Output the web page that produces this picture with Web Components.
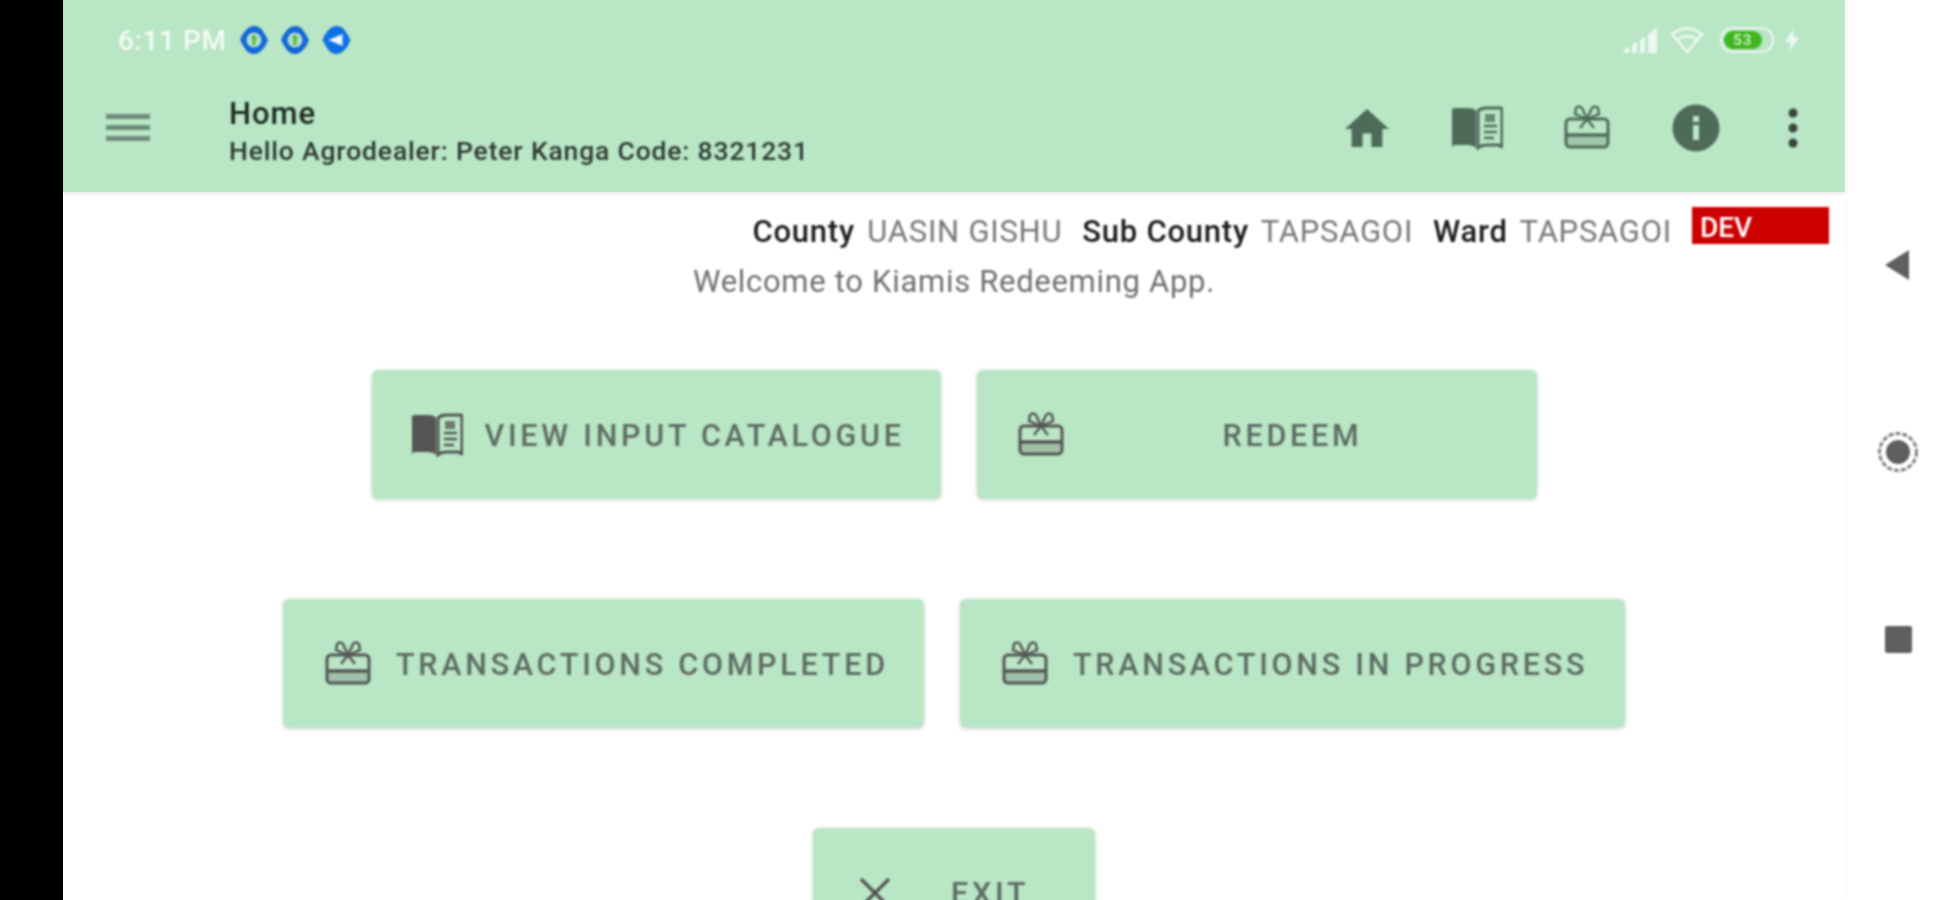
<!DOCTYPE html>
<html>
<head>
<meta charset="utf-8">
<style>
  html, body { margin: 0; height: 100%; overflow: hidden; background: #fff; font-family: Roboto, "Liberation Sans", sans-serif; }
</style>
</head>
<body>
<template id="gift">
  <svg viewBox="0 0 46 44" width="100%" height="100%" fill="none" stroke="currentColor" stroke-width="3">
    <path d="M3 31h40v7q0 3-3 3H6q-3 0-3-3z" fill="currentColor" fill-opacity=".25" stroke="none"/>
    <rect x="2" y="14" width="42" height="28" rx="4"/>
    <path d="M2 30h42" stroke-width="3.4"/>
    <path d="M23 14 18 3q-3-3-6 0l-1 6zM23 14l5-11q3-3 6 0l1 6zM23 14l-7 9M23 14l7 9" stroke-width="2.4"/>
  </svg>
</template>
<template id="book">
  <svg viewBox="0 0 52 44" width="100%" height="100%">
    <path fill="currentColor" d="M1 4q0-2 2-2h14q6 0 8 3v37q-3-3-9-3H4q-3 0-3 4z"/>
    <path fill="none" stroke="currentColor" stroke-width="3" d="M27 5q3-3 8-3h14q2 0 2 2v38q-1-3-4-3H36q-6 0-9 3z"/>
    <path fill="none" stroke="currentColor" stroke-width="2.5" d="M33 20h13M33 26h13M33 32h10"/>
    <path fill="currentColor" d="M34 8h10v8H34z" opacity=".75"/>
  </svg>
</template>

<kiamis-app>
  <status-bar slot="status" time="6:11 PM"></status-bar>
  <app-toolbar slot="toolbar" heading="Home" sub="Hello Agrodealer: Peter Kanga Code: 8321231"></app-toolbar>
  <location-line slot="content"></location-line>
  <p slot="content" class="welcome" style="margin:0;text-align:center;font:400 31px Roboto,sans-serif;color:#6e6e6e;letter-spacing:.7px;padding-top:1px">Welcome to Kiamis Redeeming App.</p>
  <menu-rows slot="content">
    <menu-button icon="book" style="--w:569px;--pl:39px;--gap:22px">VIEW INPUT CATALOGUE</menu-button>
    <menu-button icon="gift" center style="--w:560px;--pl:41px">REDEEM</menu-button>
    <menu-button icon="gift" style="--w:641px;--pl:42px;--gap:25px">TRANSACTIONS COMPLETED</menu-button>
    <menu-button icon="gift" style="--w:665px;--pl:42px;--gap:25px">TRANSACTIONS IN PROGRESS</menu-button>
    <menu-button icon="x" style="--w:282px;--pl:46px;--gap:60px">EXIT</menu-button>
  </menu-rows>
</kiamis-app>

<script>
function shadow(el, html) {
  el.attachShadow({ mode: 'open' }).innerHTML = html;
}

class KiamisApp extends HTMLElement {
  connectedCallback() {
    shadow(this, `
      <style>
        :host { display: flex; height: 900px; width: 1953px; overflow: hidden; background: #fff; }
        .bezel { width: 63px; background: #000; flex: none; }
        .screen { width: 1782px; flex: none; display: flex; flex-direction: column; }
        .head { background: #b9e6c5; height: 192px; flex: none; box-shadow: 0 1px 5px rgba(0,0,0,.12); }
        .blur { filter: blur(.9px); }
        nav-rail { flex: 1; border-left: 1px solid #f6f6f6; filter: blur(.8px); }
      </style>
      <div class="bezel"></div>
      <div class="screen">
        <div class="head"><div class="blur"><slot name="status"></slot><slot name="toolbar"></slot></div></div>
        <div class="blur"><slot name="content"></slot></div>
      </div>
      <nav-rail></nav-rail>`);
  }
}

class StatusBar extends HTMLElement {
  connectedCallback() {
    const dot = (inner) => `<svg width="28" height="30" viewBox="0 0 28 30">
        <path d="M14 1q5 0 8 4t6 10q-2 6-6 10t-8 4q-5 0-8-4t-6-10q2-6 6-10t8-4z" fill="#1367d8"/>
        <circle cx="14" cy="15" r="7.5" fill="#b4dfd0"/>${inner}</svg>`;
    const green = '<path d="M14 9l3.5 5h-2v6h-3v-6h-2z" fill="#5cb836"/>';
    shadow(this, `
      <style>
        :host { display: flex; align-items: center; height: 80px; padding: 0 45px 0 55px; box-sizing: border-box; }
        .time { font: 500 28px Roboto, sans-serif; letter-spacing: .6px; color: #f4fbf6; width: 122px; white-space: nowrap; }
        .notes { display: flex; gap: 13px; }
        .notes svg { display: block; }
        .right { margin-left: auto; display: flex; align-items: center; }
      </style>
      <span class="time">${this.getAttribute('time')}</span>
      <span class="notes">
        ${dot(green)}${dot(green)}
        <svg width="29" height="30" viewBox="0 0 28 30"><path d="M14 1q5 0 8 4t6 10q-2 6-6 10t-8 4q-5 0-8-4t-6-10q2-6 6-10t8-4z" fill="#0f70e6"/><path d="M6 15l14-6v12z" fill="#eaf6ff"/></svg>
      </span>
      <span class="right">
        <svg width="34" height="26" viewBox="0 0 34 26" fill="#eef8f1" style="margin-right:12px"><path d="M0 26v-4l5-2v6zM8 26v-8l5-3v11zM16 26V13l5-3v16zM24 26V8l9-8v26z"/></svg>
        <svg width="34" height="28" viewBox="0 0 34 28" fill="none" stroke="#eef8f1" stroke-width="2.6" style="margin-right:16px"><path d="M2 8q15-11 30 0L17 26zM8 13q9-6 18 0"/></svg>
        <battery-pill level="53"></battery-pill>
        <svg width="16" height="24" viewBox="0 0 16 24" fill="#eef8f1" style="margin-left:10px"><path d="M10 0 1 14h6l-2 10 10-15H9z"/></svg>
      </span>`);
  }
}

class BatteryPill extends HTMLElement {
  connectedCallback() {
    shadow(this, `
      <style>
        :host { display: block; width: 54px; height: 26px; box-sizing: border-box; border: 2px solid #eef8f1; border-radius: 13px; padding: 2px; }
        div { height: 100%; width: 82%; border-radius: 9px; background: #3fb51f; color: #c9efb8; font: 700 15px/18px Roboto, sans-serif; letter-spacing: 1px; text-align: center; }
      </style>
      <div>${this.getAttribute('level')}</div>`);
  }
}

class AppToolbar extends HTMLElement {
  connectedCallback() {
    const gift = document.getElementById('gift').innerHTML;
    const book = document.getElementById('book').innerHTML;
    shadow(this, `
      <style>
        :host { display: flex; align-items: center; height: 112px; color: #4e6b5a; }
        .burger { width: 44px; margin: -18px 0 0 43px; display: flex; flex-direction: column; gap: 6px; }
        .burger i { height: 5px; background: #6f8c7a; display: block; }
        .titles { margin-left: 79px; color: #1d2a22; margin-top: -13px; }
        .t { font: 500 31px/43px Roboto, sans-serif; letter-spacing: 1px; }
        .s { font: 500 26.5px/32px Roboto, sans-serif; letter-spacing: .83px; color: #2e3a33; white-space: nowrap; }
        .icons { margin-left: auto; display: flex; align-items: center; margin-top: -16px; }
        .ic { display: block; flex: none; }
      </style>
      <div class="burger"><i></i><i></i><i></i></div>
      <div class="titles"><div class="t">${this.getAttribute('heading')}</div><div class="s">${this.getAttribute('sub')}</div></div>
      <div class="icons">
        <svg class="ic" width="44" height="38" viewBox="2 3 20 17" preserveAspectRatio="none" fill="currentColor"><path d="M10 20v-6h4v6h5v-8h3L12 3 2 12h3v8z"/></svg>
        <div class="ic" style="width:52px;height:44px;margin-left:62px">${book}</div>
        <div class="ic" style="width:46px;height:44px;margin-left:61px;margin-top:-2px">${gift}</div>
        <svg class="ic" width="48" height="48" viewBox="0 0 48 48" style="margin-left:62px"><circle cx="24" cy="24" r="23.5" fill="currentColor"/><path d="M21 21h6v15h-6zM21 12h6v6h-6z" fill="#b9e6c5"/></svg>
        <svg class="ic" width="10" height="40" viewBox="0 0 10 40" fill="#37473d" style="margin-left:68px;margin-right:47px"><circle cx="5" cy="5" r="4.5"/><circle cx="5" cy="20" r="4.5"/><circle cx="5" cy="35" r="4.5"/></svg>
      </div>`);
  }
}

class LocationLine extends HTMLElement {
  connectedCallback() {
    const parts = [['County', 'UASIN GISHU'], ['Sub County', 'TAPSAGOI'], ['Ward', 'TAPSAGOI']];
    shadow(this, `
      <style>
        :host { display: flex; justify-content: flex-end; align-items: flex-start; height: 70px; padding-top: 15px; box-sizing: border-box; font: 400 31px/50px Roboto, sans-serif; letter-spacing: .75px; }
        .p { margin-right: 20px; white-space: nowrap; }
        b { font-weight: 500; color: #1c1c1c; margin-right: 4px; }
        span span { color: #777; }
        .dev { width: 137px; height: 37px; margin: 0 16px 0 0; background: #cc0000; color: #fff; font: 500 28px/41px Roboto, sans-serif; letter-spacing: 0; padding-left: 8px; box-sizing: border-box; }
      </style>
      ${parts.map(([k, v]) => `<span class="p"><b>${k}</b> <span>${v}</span></span>`).join('')}
      <div class="dev">DEV</div>`);
  }
}

class MenuRows extends HTMLElement {
  connectedCallback() {
    shadow(this, `
      <style>
        :host { display: grid; row-gap: 100px; padding-top: 70px; }
        .row { display: flex; justify-content: center; gap: 36px; }
      </style>
      <div class="row"><slot name="a"></slot></div>
      <div class="row"><slot name="b"></slot></div>
      <div class="row"><slot name="c"></slot></div>`);
    const kids = [...this.children];
    kids.forEach((k, i) => { k.slot = i < 2 ? 'a' : i < 4 ? 'b' : 'c'; });
  }
}

class MenuButton extends HTMLElement {
  connectedCallback() {
    const type = this.getAttribute('icon');
    let icon = '';
    if (type === 'gift') icon = `<span class="i" style="width:46px;height:44px;margin-top:-2px">${document.getElementById('gift').innerHTML}</span>`;
    if (type === 'book') icon = `<span class="i" style="width:52px;height:44px">${document.getElementById('book').innerHTML}</span>`;
    if (type === 'x') icon = `<span class="i" style="width:32px;height:32px"><svg viewBox="0 0 32 32" width="100%" height="100%" stroke="currentColor" stroke-width="3.4" fill="none"><path d="M2 2l28 28M30 2 2 30"/></svg></span>`;
    const center = this.hasAttribute('center');
    shadow(this, `
      <style>
        :host { display: block; width: var(--w); height: 129px; }
        button { all: unset; box-sizing: border-box; width: 100%; height: 100%; display: flex; align-items: center; padding-left: var(--pl); background: #b9e6c5; border-radius: 6px; box-shadow: 0 1px 4px rgba(0,0,0,.18); }
        .i { display: block; flex: none; color: #555; }
        .l { font: 500 30.5px Roboto, sans-serif; letter-spacing: 3.75px; margin: 2px 0 0 var(--gap, 20px); white-space: nowrap; color: #5d6b62; }
        .center { flex: 1; text-align: center; margin-left: 0; padding-right: 15px; }
      </style>
      <button>${icon}<span class="l ${center ? 'center' : ''}"><slot></slot></span></button>`);
  }
}

class NavRail extends HTMLElement {
  connectedCallback() {
    shadow(this, `
      <style>
        :host { display: flex; flex-direction: column; align-items: center; padding: 249px 3px 0 0; box-sizing: border-box; }
        svg { display: block; }
        .t { margin-right: 2px; }
        .c { margin-top: 150px; }
        .s { margin-top: 153px; }
      </style>
      <svg class="t" width="26" height="32" viewBox="0 0 26 32"><path d="M25 1v30L1 16z" fill="#5f5f5f"/></svg>
      <svg class="c" width="42" height="42" viewBox="0 0 42 42"><circle cx="21" cy="21" r="18.5" fill="none" stroke="#808080" stroke-width="3" stroke-dasharray="5 2"/><circle cx="21" cy="21" r="12" fill="#5f5f5f"/></svg>
      <svg class="s" width="27" height="27" viewBox="0 0 27 27"><rect width="27" height="27" rx="2" fill="#5f5f5f"/></svg>`);
  }
}

customElements.define('kiamis-app', KiamisApp);
customElements.define('status-bar', StatusBar);
customElements.define('battery-pill', BatteryPill);
customElements.define('app-toolbar', AppToolbar);
customElements.define('location-line', LocationLine);
customElements.define('menu-rows', MenuRows);
customElements.define('menu-button', MenuButton);
customElements.define('nav-rail', NavRail);
</script>
</body>
</html>
